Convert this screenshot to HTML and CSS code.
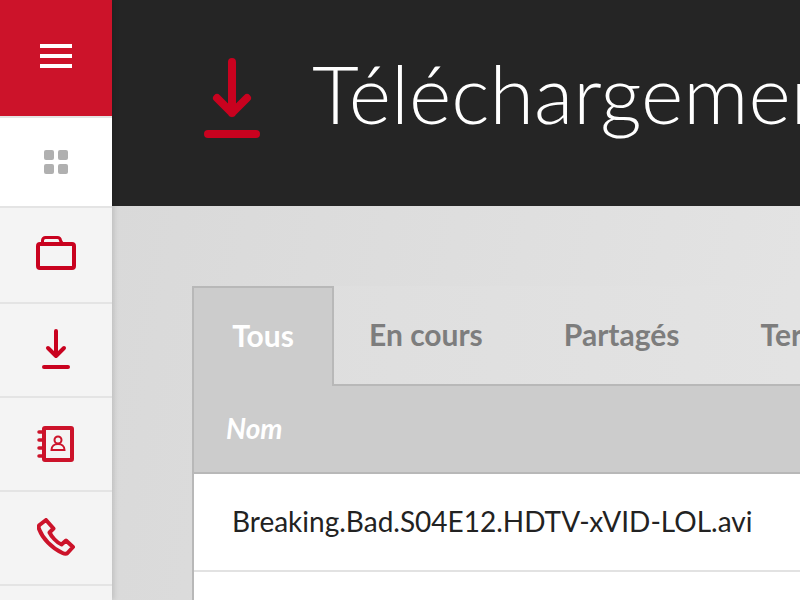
FILE: index.html
```html
<!DOCTYPE html>
<html lang="fr">
<head>
<meta charset="utf-8">
<title>Téléchargements</title>
<link rel="stylesheet" href="styles.css">
</head>
<body>
<div class="app">
  <nav class="sidebar">
    <div class="menu-btn">
      <svg width="32" height="24" viewBox="0 0 32 24"><path d="M0 0h32v4H0zM0 10h32v4H0zM0 20h32v4H0z" fill="#fff"/></svg>
    </div>
    <div class="nav-item nav-home">
      <svg width="24" height="24" viewBox="0 0 24 24" fill="#b0b0b0"><rect width="10" height="10" rx="2"/><rect x="14" width="10" height="10" rx="2"/><rect y="14" width="10" height="10" rx="2"/><rect x="14" y="14" width="10" height="10" rx="2"/></svg>
    </div>
    <div class="nav-item nav-folder">
      <svg width="40" height="34" viewBox="0 0 40 34" fill="none" stroke="#c9021f"><rect x="2" y="8" width="36" height="24" rx="2" stroke-width="4"/><path stroke-width="3" d="M6.500 7V4.500a3 3 0 0 1 3-3h12a3 3 0 0 1 3 3l2 3.500"/></svg>
    </div>
    <div class="nav-item nav-down">
      <svg width="28" height="40" viewBox="0 0 28 40" fill="none" stroke="#c9021f" stroke-width="4" stroke-linecap="round" stroke-linejoin="round"><path d="M14 2v25M6 19l8 8 8-8"/><path d="M2 38h24"/></svg>
    </div>
    <div class="nav-item nav-book">
      <svg width="38" height="36" viewBox="0 0 38 36" fill="none" stroke="#cc132a"><rect x="7" y="2" width="28" height="32" rx="1" stroke-width="4"/><path stroke-width="3.500" stroke-linecap="round" d="M2 6h4M2 14h4M2 22h4M2 30h4"/><circle cx="21" cy="14" r="3.500" stroke-width="2"/><path stroke-width="2" d="M14.500 24c0-4 3-6 6.500-6s6.500 2 6.500 6z"/></svg>
    </div>
    <div class="nav-item nav-phone">
      <svg width="38" height="38" viewBox="0 0 38 38" fill="none" stroke="#cc132a" stroke-width="4" stroke-linejoin="round"><path d="M9 2 2.500 7c-1 1-1 3 0 5 3 8 12 18 23 23 2 1 4 1 5 0l5.500-6-7-6.500-4.500 4c-5-2-10-8-12-12l4-4z"/></svg>
    </div>
    <div class="nav-item"></div>
  </nav>
  <div class="main">
    <header class="page-header">
      <svg class="title-icon" width="56" height="80" viewBox="0 0 56 80" fill="none" stroke="#c9021f" stroke-width="8" stroke-linecap="round" stroke-linejoin="round"><path d="M28 4v51M13 40l15 15 15-15"/><path d="M4 76h48"/></svg>
      <h1 class="title">Téléchargements</h1>
    </header>
    <section class="content">
      <div class="panel">
        <div class="tabs">
          <div class="tab active">Tous</div>
          <div class="tab">En cours</div>
          <div class="tab">Partagés</div>
          <div class="tab">Terminés</div>
          <div class="tab-fill"></div>
        </div>
        <div class="table-head">Nom</div>
        <div class="table-row">Breaking.Bad.S04E12.HDTV-xVID-LOL.avi</div>
        <div class="table-row"></div>
      </div>
    </section>
  </div>
</div>
</body>
</html>
```
FILE: styles.css
```css
* { box-sizing: border-box; }
html, body { margin: 0; height: 100%; overflow: hidden; }
body { font-family: Lato, "Liberation Sans", sans-serif; background: #e2e2e2; }
.app { display: flex; width: 800px; height: 600px; overflow: hidden; }
.sidebar { width: 112px; flex: none; display: flex; flex-direction: column; background: #f4f4f4; position: relative; z-index: 1; box-shadow: 2px 0 5px rgba(0,0,0,.12); }
.menu-btn { height: 118px; flex: none; display: flex; align-items: center; justify-content: center; background: #cc132a; border-bottom: 2px solid #e4e4e4; }
.menu-btn svg { margin-top: -4px; }
.nav-item { height: 94px; flex: none; display: flex; align-items: center; justify-content: center; border-bottom: 2px solid #e4e4e4; }
.nav-home { height: 90px; background: #fff; }
.nav-folder { height: 96px; padding-bottom: 4px; }
.nav-down { padding-bottom: 3px; }
.nav-phone { padding-bottom: 3px; }
.main { flex: 1; min-width: 0; display: flex; flex-direction: column; }
.page-header { height: 206px; flex: none; display: flex; align-items: center; background: #252525; padding-left: 92px; gap: 52px; }
.title-icon { flex: none; margin-top: -10px; }
.title { margin: 0 0 22px; font-weight: 300; font-size: 81px; line-height: 1; color: #fff; white-space: nowrap; }
.content { flex: 1; padding: 80px 0 0 80px; background: linear-gradient(100deg, #d9d9d9, #e4e4e4); }
.panel { width: 800px; border-left: 2px solid #b8b8b8; background: #fff; }
.tabs { display: flex; height: 100px; background: linear-gradient(90deg, #dddddd, #e5e5e5); }
.tab { padding: 0 46px 4px 35px; display: flex; align-items: center; height: 100%; font-size: 30px; font-weight: 700; color: #7d7d7d; border-bottom: 2px solid #b8b8b8; white-space: nowrap; border-top: 2px solid transparent; }
.tab.active { width: 140px; padding: 0 0 4px; justify-content: center; color: #fff; background: #cccccc; border-top-color: #b8b8b8; border-right: 2px solid #b8b8b8; border-bottom: 0; }
.tab-fill { flex: 1; border-bottom: 2px solid #b8b8b8; }
.table-head { height: 88px; display: flex; align-items: center; padding: 0 0 2px 32px; background: #cccccc; border-bottom: 2px solid #b8b8b8; color: #fff; font-size: 28px; font-weight: 700; font-style: italic; }
.table-row { height: 98px; display: flex; align-items: center; padding-left: 38px; padding-bottom: 3px; background: #fff; border-bottom: 2px solid #e2e2e2; color: #222; font-size: 28px; }
```
